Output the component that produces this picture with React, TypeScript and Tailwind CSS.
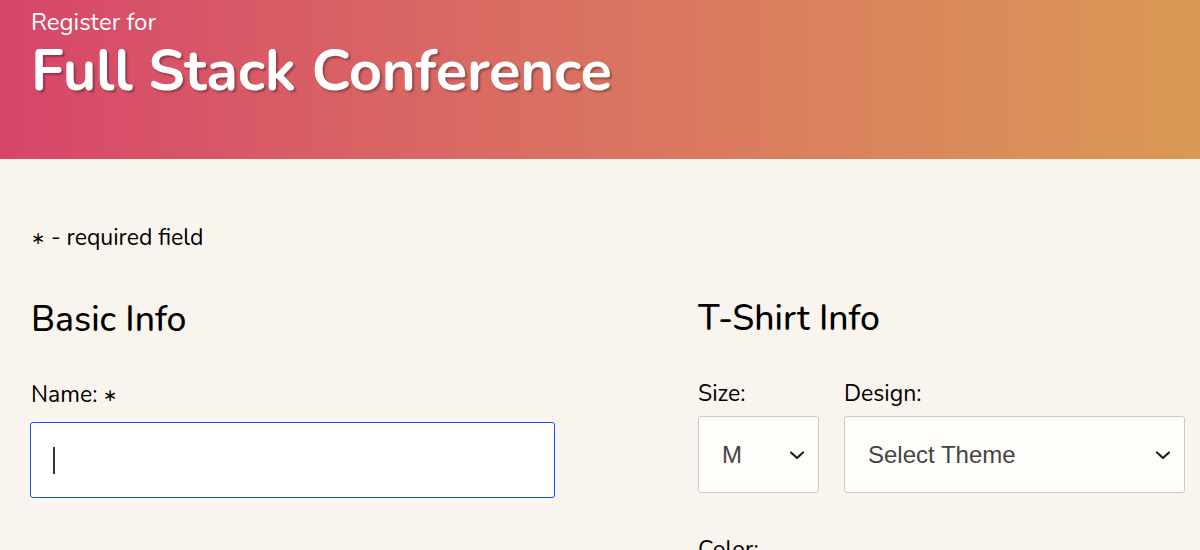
import React from "react";

function Chevron() {
  return (
    <svg width="18" height="18" viewBox="0 0 18 18" className="pointer-events-none absolute top-1/2 -translate-y-1/2" style={{ right: 12 }}>
      <path d="M3 6.5 L9 12 L15 6.5" fill="none" stroke="#222" strokeWidth="2.2" strokeLinecap="round" strokeLinejoin="round" />
    </svg>
  );
}

export default function App() {
  const font = { fontFamily: "Nunito, Lato, 'Noto Sans', sans-serif" };
  const arial = { fontFamily: "'Liberation Sans', Arial, sans-serif" };
  return (
    <div className="min-h-[550px] w-[1200px] overflow-hidden bg-[#f9f4ed] text-black" style={font}>
      <header className="h-[159px] bg-gradient-to-r from-[#d64569] to-[#da9954] px-[31px] pt-[6px] text-white">
        <p className="text-[24px] leading-[32px]">Register for</p>
        <h1 className="text-[58px] font-bold leading-[66px] tracking-[-0.2px] [text-shadow:2px_2px_2px_rgba(0,0,0,0.3)]">
          Full Stack Conference
        </h1>
      </header>
      <main className="flex px-[31px] pt-[64px]">
        <section className="w-[524px]">
          <p className="text-[23px] leading-[30px]">
            <span className="text-[17px] align-middle">∗</span> - required field
          </p>
          <h2 className="mt-[44px] text-[35.5px] font-medium leading-[44px]">Basic Info</h2>
          <label className="mt-[38px] block text-[23px] leading-[30px]">
            Name: <span className="text-[17px] align-middle">∗</span>
          </label>
          <div className="relative ml-[-1px] mt-[10px]">
            <input
              type="text"
              className="block h-[76px] w-[525px] rounded-[3px] border border-[#1a4ef0] bg-white px-[23px] text-[22px] caret-transparent outline-none"
            />
            <span className="absolute left-[23px] top-[25px] h-[27px] w-[2px] bg-[#333]" />
          </div>
        </section>
        <section className="ml-[143px] flex-1">
          <div className="h-[30px]" />
          <h2 className="mt-[44px] text-[35.5px] font-medium leading-[44px]">T-Shirt Info</h2>
          <div className="mt-[38px] flex gap-[25px]">
            <div>
              <label className="block text-[23px] leading-[30px]">Size:</label>
              <div className="relative mt-[7px] h-[77px] w-[121px] rounded-[3px] border border-[#cfcac4] bg-[#fffdf9]">
                <span className="absolute left-[23px] top-1/2 -translate-y-1/2 text-[24px] text-[#444]" style={arial}>M</span>
                <Chevron />
              </div>
            </div>
            <div>
              <label className="block text-[23px] leading-[30px]">Design:</label>
              <div className="relative mt-[7px] h-[77px] w-[341px] rounded-[3px] border border-[#cfcac4] bg-[#fffdf9]">
                <span className="absolute left-[23px] top-1/2 -translate-y-1/2 text-[24px] text-[#444]" style={arial}>Select Theme</span>
                <Chevron />
              </div>
            </div>
          </div>
          <label className="mt-[42px] block text-[23px] leading-[30px]">Color:</label>
        </section>
      </main>
    </div>
  );
}
